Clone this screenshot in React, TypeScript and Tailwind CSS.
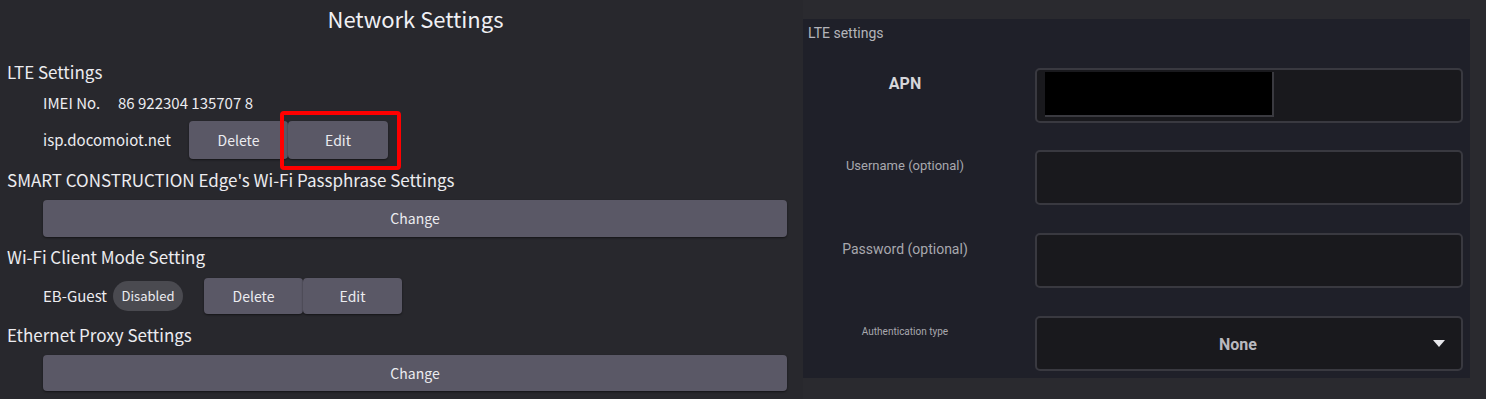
import React from "react";

const noto = "font-['Noto_Sans_CJK_JP','Noto_Sans',sans-serif]";
const robo = "font-['Roboto','Inter',sans-serif]";

function Btn({ label, className = "" }: { label: string; className?: string }) {
  return (
    <button
      className={`flex items-center justify-center rounded-[4px] bg-[#5a5866] text-[14px] text-[#ececf0] shadow-[0_1px_2px_rgba(0,0,0,0.5)] ${className}`}
    >
      {label}
    </button>
  );
}

function Heading({ text, className = "" }: { text: string; className?: string }) {
  return (
    <div className={`flex h-[32px] items-center pl-[7px] text-[17px] text-[#ececf0] ${className}`}>
      {text}
    </div>
  );
}

function Field({ label, labelClass, children }: { label: string; labelClass: string; children?: React.ReactNode }) {
  return (
    <div className="flex h-[55px] items-stretch">
      <div className={`flex w-[204px] items-center justify-center ${labelClass}`}>{label}</div>
      <div className="ml-[28px] flex-1 rounded-[5px] border-2 border-[#393940] bg-[#19191d] relative">
        {children}
      </div>
    </div>
  );
}

export default function App() {
  return (
    <div className="flex h-[399px] w-[1486px] overflow-hidden bg-[#28282d]">
      {/* Left: Network Settings */}
      <div className={`w-[803px] shrink-0 ${noto}`}>
        <div className="flex h-[36px] items-center justify-center pl-[28px] text-[22px] text-[#f0f0f4]">
          Network Settings
        </div>

        <Heading text="LTE Settings" className="mt-[20px]" />

        <div className="flex h-[30px] items-center pl-[43px] text-[15px] text-[#ececf0]">
          <span className="w-[75px]">IMEI No.</span>
          <span>86 922304 135707 8</span>
        </div>

        <div className="mt-[3px] flex h-[38px] items-center pl-[43px] text-[15px] text-[#ececf0]">
          <span className="w-[146px]">isp.docomoiot.net</span>
          <Btn label="Delete" className="h-[38px] w-[99px]" />
          <div className="relative">
            <Btn label="Edit" className="h-[38px] w-[100px]" />
            <div className="absolute left-[-8px] top-[-10px] h-[59px] w-[121px] rounded-[4px] border-[4px] border-[#ff0000]" />
          </div>
        </div>

        <Heading text="SMART CONSTRUCTION Edge's Wi-Fi Passphrase Settings" className="mt-[5px]" />

        <div className="mt-[4px] pl-[43px] pr-[16px]">
          <Btn label="Change" className="h-[37px] w-full" />
        </div>

        <Heading text="Wi-Fi Client Mode Setting" className="mt-[4px]" />

        <div className="mt-[5px] flex h-[36px] items-center pl-[43px] text-[15px] text-[#ececf0]">
          <span className="w-[70px]">EB-Guest</span>
          <span className="flex h-[30px] w-[70px] items-center justify-center rounded-full bg-[#4a4a50] text-[13px]">
            Disabled
          </span>
          <Btn label="Delete" className="ml-[21px] h-[36px] w-[99px]" />
          <Btn label="Edit" className="h-[36px] w-[99px]" />
        </div>

        <Heading text="Ethernet Proxy Settings" className="mt-[5px]" />

        <div className="mt-[4px] pl-[43px] pr-[16px]">
          <Btn label="Change" className="h-[36px] w-full" />
        </div>
      </div>

      {/* Right: LTE settings dialog */}
      <div className="flex-1 bg-[#2a2a2f] pt-[19px] pr-[16px]">
        <div className={`h-[359px] bg-[#1f2029] pl-[0px] pr-[7px] ${robo}`}>
          <div className="flex h-[28px] items-center pl-[5px] pt-[1px] text-[14px] text-[#b4b4ba]">
            LTE settings
          </div>

          <div className="mt-[21px]">
            <Field label="APN" labelClass="text-[16px] font-bold text-[#d6d6da] -mt-[24px]">
              <div className="absolute left-[8px] top-[2px] h-[45px] w-[229px] bg-black border-b-2 border-r-2 border-[#3a3a40]" />
            </Field>
          </div>

          <div className="mt-[27px]">
            <Field label="Username (optional)" labelClass="text-[13px] text-[#a8a8ae] -mt-[24px]" />
          </div>

          <div className="mt-[28px]">
            <Field label="Password (optional)" labelClass="text-[14px] text-[#a8a8ae] -mt-[22px]" />
          </div>

          <div className="mt-[28px]">
            <Field label="Authentication type" labelClass="text-[10px] text-[#a8a8ae] -mt-[24px]">
              <div className="flex h-full items-center justify-center pr-[22px] pt-[2px] text-[16px] font-bold text-[#b8b8be]">
                None
              </div>
              <svg className="absolute right-[16px] top-[22px]" width="12" height="8" viewBox="0 0 12 8">
                <path d="M0 0 L12 0 L6 7 Z" fill="#e8e8ec" />
              </svg>
            </Field>
          </div>
        </div>
      </div>
    </div>
  );
}
